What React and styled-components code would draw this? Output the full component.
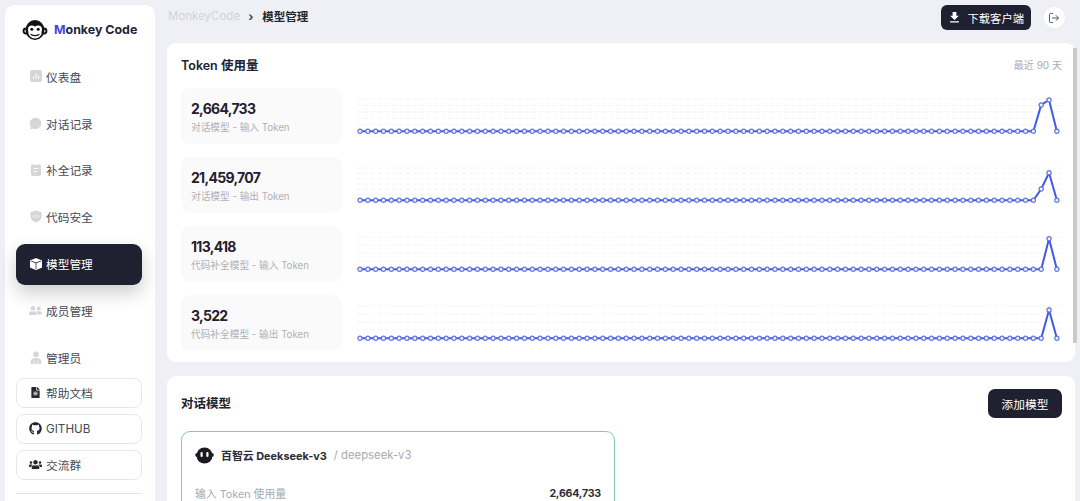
import React from 'react'
import styled, { createGlobalStyle } from 'styled-components'
import { FaGithub, FaUsers, FaUserFriends, FaFileAlt } from 'react-icons/fa'
import { BsBoxFill } from 'react-icons/bs'
import { IoChatbubble } from 'react-icons/io5'
import { MdDownload } from 'react-icons/md'
import { LuLogOut } from 'react-icons/lu'

const GlobalStyle = createGlobalStyle`
  html, body {
    margin: 0;
    height: 100%;
    overflow: hidden;
    background: #eff0f6;
    font-family: Inter, "Noto Sans CJK SC", sans-serif;
  }
  * { box-sizing: border-box; }
`

const Page = styled.div`
  display: flex;
  gap: 12px;
  height: 501px;
  padding: 5px 5px 0;
  overflow: hidden;
`

const Sidebar = styled.aside`
  flex: 0 0 150px;
  height: 520px;
  background: #fff;
  border-radius: 10px;
  padding: 0 13px 0 11px;
`

const Brand = styled.div`
  display: flex;
  align-items: center;
  gap: 6px;
  height: 52px;
  padding: 0 0 3px 6px;
  font-size: 12.4px;
  font-weight: 700;
  color: #23263a;
  white-space: nowrap;
  b { color: #3d48e8; font-weight: 700; }
`

const Nav = styled.nav`
  display: flex;
  flex-direction: column;
  gap: 6px;
`

const IconSlot = styled.span`
  flex: 0 0 13px;
  display: flex;
  align-items: center;
  justify-content: center;
`

const NavItem = styled.div`
  display: flex;
  align-items: center;
  gap: 4px;
  height: 40.8px;
  padding: 0 13px 2px;
  border-radius: 9px;
  font-size: 11.7px;
  color: ${p => (p.$active ? '#fff' : '#454955')};
  background: ${p => (p.$active ? '#1f2030' : 'transparent')};
  box-shadow: ${p => (p.$active ? '0 8px 18px rgba(32,33,50,0.22)' : 'none')};
  svg { color: ${p => (p.$active ? '#fff' : '#d6d6d8')}; flex: none; }
`

const LinkList = styled.div`
  display: flex;
  flex-direction: column;
  gap: 6px;
  margin-top: -1px;
`

const LinkButton = styled.div`
  display: flex;
  align-items: center;
  gap: 4px;
  height: 30px;
  padding: 0 12px;
  border: 1px solid #e8e8ec;
  border-radius: 8px;
  font-size: 11.7px;
  color: #454955;
  svg { color: #25262f; flex: none; }
`

const Divider = styled.hr`
  margin: 13.5px 0 0;
  border: 0;
  border-top: 1px solid #e4e4e8;
`

const Main = styled.main`
  position: relative;
  flex: 1;
  min-width: 0;
`

const Topbar = styled.header`
  display: flex;
  align-items: center;
  height: 25px;
  margin-bottom: 13px;
  font-size: 11.5px;
  color: #25262f;
`

const Breadcrumb = styled.div`
  display: flex;
  align-items: center;
  margin-top: -3px;
`

const Crumb = styled.span`
  color: #d2d3d8;
  margin-left: 1px;
`

const CrumbSep = styled.span`
  margin: 0 9px 0 8px;
  font-weight: 700;
  font-size: 12px;
  color: #45464f;
`

const CrumbNow = styled.span`
  font-weight: 600;
`

const DownloadButton = styled.button`
  display: flex;
  align-items: center;
  gap: 6px;
  height: 25px;
  width: 90px;
  margin-left: auto;
  padding: 0 0 0 6px;
  border: 0;
  border-radius: 6px;
  background: #1f2030;
  color: #fff;
  font: inherit;
  font-size: 11.3px;
`

const RoundButton = styled.div`
  display: flex;
  align-items: center;
  justify-content: center;
  width: 21px;
  height: 21px;
  margin: 0 10.5px 0 13px;
  border-radius: 50%;
  background: #fff;
  color: #55565c;
`

const Card = styled.section`
  background: #fff;
  border-radius: 9px;
  padding: ${p => p.$pad || '12px 13px 12px 14px'};
  margin-bottom: 14px;
`

const CardHead = styled.div`
  display: flex;
  align-items: center;
  justify-content: space-between;
  height: ${p => p.$h || '19px'};
  margin-bottom: ${p => p.$mb || '14px'};
`

const CardTitle = styled.h2`
  margin: 0 0 ${p => p.$lift || '0'};
  font-size: 12.5px;
  font-weight: 600;
  color: #21222d;
`

const Hint = styled.span`
  font-size: 10px;
  color: #aaabb0;
`

const StatList = styled.div`
  display: flex;
  flex-direction: column;
  gap: 13px;
`

const StatRow = styled.div`
  display: flex;
  gap: 15px;
  height: 56px;
`

const StatBox = styled.div`
  flex: 0 0 161px;
  display: flex;
  flex-direction: column;
  justify-content: center;
  padding: 2px 0 0 10px;
  background: #fafafa;
  border-radius: 9px;
`

const StatValue = styled.div`
  font-size: 14px;
  font-weight: 700;
  letter-spacing: -0.7px;
  line-height: 19px;
  color: #1f2030;
`

const StatLabel = styled.div`
  margin-top: 2px;
  font-size: 9.7px;
  line-height: 16px;
  color: #b0b1b6;
`

const ChartSvg = styled.svg`
  flex: 1;
  min-width: 0;
  height: 56px;
  display: block;
`

const Scrollbar = styled.div`
  position: absolute;
  top: 43px;
  right: -2px;
  width: 4px;
  height: 295px;
  background: #c9c9cc;
`

const AddButton = styled.button`
  height: 29px;
  width: 74px;
  border: 0;
  border-radius: 7px;
  background: #1f2030;
  color: #fff;
  font: inherit;
  font-size: 11.7px;
`

const ModelCard = styled.div`
  width: 434px;
  height: 120px;
  padding: 13px 13px;
  border: 1px solid #7fd0a6;
  border-radius: 9px;
`

const ModelHead = styled.div`
  display: flex;
  align-items: center;
  height: 20px;
  margin-bottom: 20px;
`

const ModelName = styled.span`
  margin-left: 7px;
  font-size: 10.9px;
  font-weight: 700;
  color: #2a2b36;
`

const ModelId = styled.span`
  margin-left: 7px;
  font-size: 11.3px;
  color: #a9aab0;
`

const ModelRow = styled.div`
  display: flex;
  justify-content: space-between;
  align-items: center;
  height: 16px;
  font-size: 10.8px;
  color: #a9aab0;
  b { font-size: 10.6px; font-weight: 700; letter-spacing: -0.2px; color: #2a2b36; }
`

function MonkeyLogo() {
  return (
    <svg width="26" height="26" viewBox="0 0 26 26">
      <circle cx="4" cy="14" r="3.4" fill="#111" />
      <circle cx="22" cy="14" r="3.4" fill="#111" />
      <circle cx="4" cy="14" r="1.5" fill="#fff" />
      <circle cx="22" cy="14" r="1.5" fill="#fff" />
      <ellipse cx="13" cy="13" rx="9.5" ry="10" fill="#111" />
      <path d="M6 12c0-3 3-4 4.5-3.4 1 .4 1.800.9 2.500.9s1.500-.5 2.500-.9C17 8 20 9 20 12c0 1.500-.4 2.200-.4 3 .4 3.500-2.800 6.500-6.600 6.500S6 18.500 6.400 15c0-.8-.4-1.500-.4-3z" fill="#fff" />
      <circle cx="9.800" cy="12.300" r="1.500" fill="#111" />
      <circle cx="16.200" cy="12.300" r="1.500" fill="#111" />
      <path d="M9 17.500c2.500 1.500 5.500 1.500 8 0" stroke="#111" strokeWidth="1.200" fill="none" strokeLinecap="round" />
    </svg>
  )
}

function DashIcon() {
  return (
    <svg width="12" height="12" viewBox="0 0 12 12">
      <rect width="12" height="12" rx="2.500" fill="currentColor" />
      <path d="M3.500 9V6.500M6 9V3.500M8.500 9V5.500" stroke="#fff" strokeWidth="1.100" />
    </svg>
  )
}

function ClipIcon() {
  return (
    <svg width="12" height="13" viewBox="0 0 12 13">
      <rect x="1" y="1" width="10" height="12" rx="2" fill="currentColor" />
      <path d="M3.500 5.500h5M3.500 8.500h3.500" stroke="#fff" strokeWidth="1.100" />
      <path d="M3 1.500h6" stroke="#fff" strokeWidth="0.800" />
    </svg>
  )
}

function ShieldIcon() {
  return (
    <svg width="12" height="13" viewBox="0 0 12 13">
      <path d="M6 .5l5.500 1.800v4.200c0 3-2.300 5-5.500 6-3.200-1-5.500-3-5.500-6V2.300z" fill="currentColor" />
      <path d="M4.200 5L2.900 6.300l1.300 1.300M7.800 5l1.300 1.300-1.300 1.300M6.600 4.800L5.400 7.800" stroke="#fff" strokeWidth="0.800" fill="none" />
    </svg>
  )
}

function AdminIcon() {
  return (
    <svg width="12" height="13" viewBox="0 0 12 13">
      <circle cx="6" cy="3.200" r="2.800" fill="currentColor" />
      <path d="M.8 13V10c0-2 2-3 5.200-3s5.200 1 5.200 3v3z" fill="currentColor" />
      <path d="M4.200 9.500V13M7.800 9.500V13" stroke="#fff" strokeWidth="0.800" />
    </svg>
  )
}

function ModelLogo() {
  return (
    <svg width="19" height="17" viewBox="0 0 19 17">
      <circle cx="2.200" cy="8" r="2" fill="#1b1b1f" />
      <circle cx="16.800" cy="8" r="2" fill="#1b1b1f" />
      <ellipse cx="9.500" cy="8.500" rx="8" ry="8" fill="#1b1b1f" />
      <rect x="5.500" y="5" width="2.200" height="5" rx="1.100" fill="#fff" />
      <rect x="11.300" y="5" width="2.200" height="5" rx="1.100" fill="#fff" />
    </svg>
  )
}

const POINTS = 90
const STEP = 7.83
const BASE = 43.3

function Sparkline({ peaks, lines, top }) {
  const pts = Array.from({ length: POINTS }, (_, i) => [3 + i * STEP, peaks[i] ?? BASE])
  const gap = (BASE - top) / lines
  return (
    <ChartSvg viewBox="0 0 705 56" preserveAspectRatio="none">
      {Array.from({ length: lines }, (_, i) => (
        <line key={i} x1="0" x2="705" y1={top + i * gap} y2={top + i * gap} stroke="#f3f3f5" strokeDasharray="4 3" />
      ))}
      <polyline points={pts.map(p => p.join(',')).join(' ')} fill="none" stroke="#4258e8" strokeWidth="2" />
      {pts.map(([x, y], i) => (
        <circle key={i} cx={x} cy={y} r="2.100" fill="#eef0fc" stroke="#6478da" strokeWidth="1.200" />
      ))}
    </ChartSvg>
  )
}

const navItems = [
  { label: '仪表盘', icon: <DashIcon /> },
  { label: '对话记录', icon: <IoChatbubble size={13} /> },
  { label: '补全记录', icon: <ClipIcon /> },
  { label: '代码安全', icon: <ShieldIcon /> },
  { label: '模型管理', icon: <BsBoxFill size={12} />, active: true },
  { label: '成员管理', icon: <FaUserFriends size={13} /> },
  { label: '管理员', icon: <AdminIcon /> },
]

const links = [
  { label: '帮助文档', icon: <FaFileAlt size={11} /> },
  { label: 'GITHUB', icon: <FaGithub size={13} /> },
  { label: '交流群', icon: <FaUsers size={13} /> },
]

const stats = [
  { value: '2,664,733', label: '对话模型 - 输入 Token', peaks: { 87: 17, 88: 12 }, lines: 5, top: 11 },
  { value: '21,459,707', label: '对话模型 - 输出 Token', peaks: { 87: 32, 88: 15.7 }, lines: 6, top: 11 },
  { value: '113,418', label: '代码补全模型 - 输入 Token', peaks: { 88: 12.7 }, lines: 4, top: 11 },
  { value: '3,522', label: '代码补全模型 - 输出 Token', peaks: { 88: 15 }, lines: 4, top: 11 },
]

export default function App() {
  return (
    <Page>
      <GlobalStyle />
      <Sidebar>
        <Brand>
          <MonkeyLogo />
          <span><b>M</b>onkey Code</span>
        </Brand>
        <Nav>
          {navItems.map(item => (
            <NavItem key={item.label} $active={item.active}>
              <IconSlot>{item.icon}</IconSlot>
              {item.label}
            </NavItem>
          ))}
        </Nav>
        <LinkList>
          {links.map(link => (
            <LinkButton key={link.label}>
              <IconSlot>{link.icon}</IconSlot>
              {link.label}
            </LinkButton>
          ))}
        </LinkList>
        <Divider />
      </Sidebar>
      <Main>
        <Topbar>
          <Breadcrumb>
            <Crumb>MonkeyCode</Crumb>
            <CrumbSep>›</CrumbSep>
            <CrumbNow>模型管理</CrumbNow>
          </Breadcrumb>
          <DownloadButton>
            <MdDownload size={15} />
            下载客户端
          </DownloadButton>
          <RoundButton>
            <LuLogOut size={12} />
          </RoundButton>
        </Topbar>
        <Card $pad="12px 13px 11px 14px">
          <CardHead>
            <CardTitle>Token 使用量</CardTitle>
            <Hint>最近 90 天</Hint>
          </CardHead>
          <StatList>
            {stats.map(stat => (
              <StatRow key={stat.value}>
                <StatBox>
                  <StatValue>{stat.value}</StatValue>
                  <StatLabel>{stat.label}</StatLabel>
                </StatBox>
                <Sparkline peaks={stat.peaks} lines={stat.lines} top={stat.top} />
              </StatRow>
            ))}
          </StatList>
        </Card>
        <Card $pad="13px 13px 14px 14px">
          <CardHead $h="29px" $mb="13px">
            <CardTitle $lift="3px">对话模型</CardTitle>
            <AddButton>添加模型</AddButton>
          </CardHead>
          <ModelCard>
            <ModelHead>
              <ModelLogo />
              <ModelName>百智云 Deekseek-v3</ModelName>
              <ModelId>/ deepseek-v3</ModelId>
            </ModelHead>
            <ModelRow>
              输入 Token 使用量
              <b>2,664,733</b>
            </ModelRow>
          </ModelCard>
        </Card>
        <Scrollbar />
      </Main>
    </Page>
  )
}
